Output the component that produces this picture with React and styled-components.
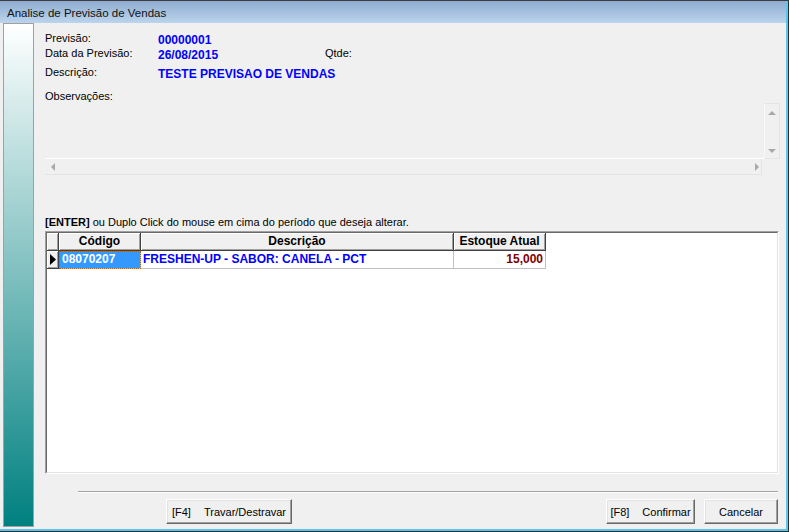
import styled, { createGlobalStyle } from 'styled-components'

const GlobalStyle = createGlobalStyle`
  html, body {
    margin: 0;
    padding: 0;
    background: #f0f0f0;
  }
  body {
    font-family: "Liberation Sans", Arial, sans-serif;
    font-size: 11px;
    color: #000;
  }
`

const Window = styled.div`
  width: 789px;
  height: 532px;
  box-sizing: border-box;
  display: flex;
  flex-direction: column;
  border-top: 1px solid #3c3c3c;
  border-right: 1px solid #2e2e2e;
  border-bottom: 1px solid #2e2e2e;
  background: #f0f0f0;
  overflow: hidden;
`

const Frame = styled.div`
  flex: 1;
  display: flex;
  flex-direction: column;
  min-height: 0;
  border-right: 2px solid #5ac6ee;
  border-bottom: 2px solid #5ac6ee;
`

const TitleBar = styled.div`
  flex: none;
  height: 22px;
  box-sizing: border-box;
  padding: 2px 0 0 7px;
  line-height: 20px;
  font-size: 11.5px;
  color: #111;
  background: linear-gradient(to bottom, #8eacd0, #bcd4ed);
`

const Body = styled.div`
  flex: 1;
  display: flex;
  min-height: 0;
  padding: 0 0 2px 3px;
`

const SidePanel = styled.div`
  flex: none;
  width: 31px;
  box-sizing: border-box;
  border: 1px solid #a0a0a0;
  background: linear-gradient(to bottom, #ffffff, #008080);
`

const Main = styled.div`
  flex: 1;
  min-width: 0;
  display: flex;
  flex-direction: column;
  padding: 8px 7px 0 11px;
`

const InfoRow = styled.div`
  display: grid;
  grid-template-columns: 113px 167px auto;
  height: 15px;
  line-height: 15px;
  white-space: nowrap;
  margin-top: ${p => p.$top || 0}px;
`

const Value = styled.span`
  font-weight: bold;
  font-size: 12px;
  line-height: 18px;
  color: #0000ff;
  white-space: nowrap;
`

const Memo = styled.div`
  display: grid;
  grid-template-columns: 1fr 16px;
  grid-template-rows: 56px 16px;
  height: 72px;
  margin: -1px -1px 0 0;
`

const MemoText = styled.div`
  border-bottom: 1px solid #fff;
`

const VScroll = styled.div`
  box-sizing: border-box;
  display: flex;
  flex-direction: column;
  justify-content: space-between;
  align-items: center;
  padding: 7px 0 5px;
  border: 1px solid #e4e4e4;
  border-left-color: #fafafa;
`

const HScroll = styled.div`
  box-sizing: border-box;
  display: flex;
  justify-content: space-between;
  align-items: center;
  padding: 0 2px 0 6px;
  border-bottom: 1px solid #e4e4e4;
  border-right: 1px solid #e4e4e4;
  margin-right: 2px;
`

const Arrow = ({ dir }) => {
  const pts = {
    up: '0,4 4,0 8,4',
    down: '0,0 8,0 4,4',
    left: '4,0 4,8 0,4',
    right: '0,0 0,8 4,4',
  }[dir]
  const vertical = dir === 'up' || dir === 'down'
  return (
    <svg width={vertical ? 8 : 4} height={vertical ? 4 : 8}>
      <polygon points={pts} fill="#a9a9a9" />
    </svg>
  )
}

const Hint = styled.div`
  margin-top: 40px;
  line-height: 14px;
  b {
    font-weight: bold;
  }
`

const GridOuter = styled.div`
  margin-top: 2px;
  height: 243px;
  box-sizing: border-box;
  border: 1px solid;
  border-color: #a0a0a0 #fff #fff #a0a0a0;
`

const GridInner = styled.div`
  height: 100%;
  box-sizing: border-box;
  border: 1px solid;
  border-color: #696969 #e3e3e3 #e3e3e3 #696969;
  background: #fff;
`

const GridRow = styled.div`
  display: grid;
  grid-template-columns: 12px 82px 313px 92px;
  height: 18px;
  font-size: 12px;
  font-weight: bold;
  line-height: 17px;
`

const FixedCell = styled.div`
  box-sizing: border-box;
  background: #f0f0f0;
  border-right: 1px solid #404040;
  border-bottom: 1px solid #404040;
  box-shadow: inset 1px 1px #fff, inset -1px -1px #a0a0a0;
  text-align: center;
  display: flex;
  align-items: center;
  justify-content: center;
`

const Cell = styled.div`
  box-sizing: border-box;
  border-right: 1px solid #c0c0c0;
  border-bottom: 1px solid #c0c0c0;
  padding: 0 2px;
  white-space: nowrap;
  overflow: hidden;
  text-align: ${p => p.$align || 'left'};
  color: ${p => p.$color || '#0000ff'};
  ${p => p.$selected && `
    background: #3399ff;
    color: #fff;
    outline: 1px dotted #b0600c;
    outline-offset: -1px;
    padding-left: 3px;
  `}
`

const Separator = styled.div`
  margin: 17px 1px 0 33px;
  height: 2px;
  box-sizing: border-box;
  border-top: 1px solid #a0a0a0;
  border-bottom: 1px solid #fff;
`

const ButtonBar = styled.div`
  display: flex;
  margin: 6px 1px 0 121px;
`

const Button = styled.button`
  width: ${p => p.$width}px;
  height: 25px;
  box-sizing: border-box;
  margin-left: ${p => p.$gap || 0}px;
  padding: 0;
  display: flex;
  align-items: center;
  justify-content: center;
  gap: 13px;
  font-family: "Liberation Sans", Arial, sans-serif;
  font-size: 11px;
  color: #000;
  background: #f0f0f0;
  border: 1px solid;
  border-color: #fff #696969 #696969 #fff;
  box-shadow: inset -1px -1px #a0a0a0, inset 1px 1px #e3e3e3;
`

const Spacer = styled.div`
  flex: 1;
`

const App = () => (
  <>
    <GlobalStyle />
    <Window>
      <Frame>
        <TitleBar>Analise de Previsão de Vendas</TitleBar>
        <Body>
          <SidePanel />
          <Main>
            <InfoRow>
              <span>Previsão:</span>
              <Value>00000001</Value>
            </InfoRow>
            <InfoRow>
              <span>Data da Previsão:</span>
              <Value>26/08/2015</Value>
              <span>Qtde:</span>
            </InfoRow>
            <InfoRow $top={4}>
              <span>Descrição:</span>
              <Value>TESTE PREVISAO DE VENDAS</Value>
            </InfoRow>
            <InfoRow $top={9}>
              <span>Observações:</span>
            </InfoRow>
            <Memo>
              <MemoText />
              <VScroll>
                <Arrow dir="up" />
                <Arrow dir="down" />
              </VScroll>
              <HScroll>
                <Arrow dir="left" />
                <Arrow dir="right" />
              </HScroll>
            </Memo>
            <Hint>
              <b>[ENTER]</b> ou Duplo Click do mouse em cima do período que deseja alterar.
            </Hint>
            <GridOuter>
              <GridInner>
                <GridRow>
                  <FixedCell />
                  <FixedCell>Código</FixedCell>
                  <FixedCell>Descrição</FixedCell>
                  <FixedCell>Estoque Atual</FixedCell>
                </GridRow>
                <GridRow>
                  <FixedCell>
                    <svg width="6" height="11">
                      <polygon points="0,0 6,5.5 0,11" fill="#000" />
                    </svg>
                  </FixedCell>
                  <Cell $selected>08070207</Cell>
                  <Cell>FRESHEN-UP - SABOR: CANELA - PCT</Cell>
                  <Cell $align="right" $color="#800000">15,000</Cell>
                </GridRow>
              </GridInner>
            </GridOuter>
            <Separator />
            <ButtonBar>
              <Button $width={126}>
                <span>[F4]</span>
                <span>Travar/Destravar</span>
              </Button>
              <Spacer />
              <Button $width={89}>
                <span>[F8]</span>
                <span>Confirmar</span>
              </Button>
              <Button $width={74} $gap={9}>Cancelar</Button>
            </ButtonBar>
          </Main>
        </Body>
      </Frame>
    </Window>
  </>
)

export default App
